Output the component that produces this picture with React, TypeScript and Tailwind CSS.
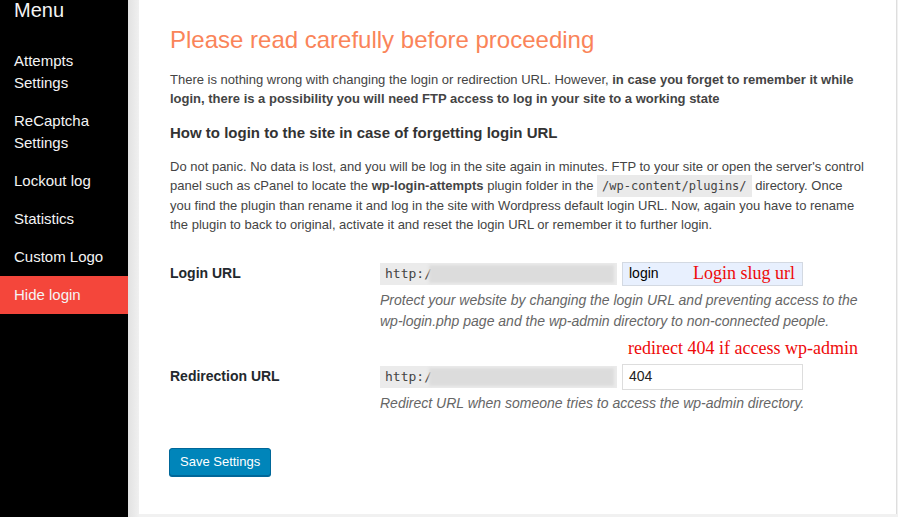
import React from "react";

const menu: { label: string[]; active?: boolean }[] = [
  { label: ["Attempts", "Settings"] },
  { label: ["ReCaptcha", "Settings"] },
  { label: ["Lockout log"] },
  { label: ["Statistics"] },
  { label: ["Custom Logo"] },
  { label: ["Hide login"], active: true },
];

function UrlBox() {
  return (
    <div className="relative flex h-[22px] w-[237px] items-center overflow-hidden bg-[#ebebeb] pl-[5px] font-['DejaVu_Sans_Mono',monospace] text-[13px] text-[#444]">
      <span>http:/</span>
      <div className="absolute left-[49px] top-[2px] h-[18px] w-[185px] bg-[#dcdcdc] blur-[1.5px]" />
    </div>
  );
}

export default function App() {
  return (
    <div className="flex h-[517px] w-[898px] overflow-hidden bg-[#f1f1f1] font-['Liberation_Sans',Arial,sans-serif]">
      <aside className="w-[128px] shrink-0 bg-black text-[#f4f4f4]">
        <div className="h-[42px] pl-[14px] text-[20px] leading-[20px]">Menu</div>
        {menu.map((m) => (
          <div
            key={m.label.join(" ")}
            className={
              m.active
                ? "bg-[#f4463b] py-[8px] pl-[14px] text-[15px] leading-[22px]"
                : "py-[8px] pl-[14px] text-[15px] leading-[22px]"
            }
          >
            {m.label.map((l) => (
              <div key={l}>{l}</div>
            ))}
          </div>
        ))}
      </aside>
      <div className="w-[11px] shrink-0 bg-[linear-gradient(to_right,#e2e2e2,#f0f0f0)]" />
      <main className="h-[514px] w-[758px] shrink-0 border-r border-[#dedede] bg-white pl-[31px] pr-[32px] pt-[24px] text-[#444]">
        <h1 className="text-[24px] leading-[31px] text-[#fa8459]">Please read carefully before proceeding</h1>
        <p className="mt-[15px] text-[13px] leading-[19px]">
          There is nothing wrong with changing the login or redirection URL. However,{" "}
          <b>in case you forget to remember it while login, there is a possibility you will need FTP access to log in your site to a working state</b>
        </p>
        <h3 className="mt-[15px] text-[15px] font-bold leading-[20px] text-[#333]">
          How to login to the site in case of forgetting login URL
        </h3>
        <p className="mt-[14px] text-[13px] leading-[19.4px]">
          Do not panic. No data is lost, and you will be log in the site again in minutes. FTP to your site or open the server's control panel such as cPanel to locate the <b>wp-login-attempts</b> plugin folder in the{" "}
          <code className="bg-[#eaeaea] px-[5px] py-[4px] font-['DejaVu_Sans_Mono',monospace] text-[12px] leading-[12px]">/wp-content/plugins/</code>{" "}
          directory. Once you find the plugin than rename it and log in the site with Wordpress default login URL. Now, again you have to rename the plugin to back to original, activate it and reset the login URL or remember it to further login.
        </p>

        <div className="mt-[27px] flex">
          <div className="flex h-[24px] w-[210px] shrink-0 items-center text-[14px] font-bold text-[#23282d]">Login URL</div>
          <div className="flex-1">
            <div className="relative flex items-center gap-[5px]">
              <UrlBox />
              <div className="flex h-[24px] w-[181px] items-center border border-[#d3d9e2] bg-[#e8f0fe] px-[6px] text-[14px] text-black">
                login
              </div>
              <span className="absolute left-[313px] top-[-2px] whitespace-nowrap font-['Liberation_Serif',serif] text-[18px] text-[#ee0a0a]">
                Login slug url
              </span>
            </div>
            <p className="mt-[4px] text-[14px] italic leading-[21px] text-[#666]">
              Protect your website by changing the login URL and preventing access to the wp-login.php page and the wp-admin directory to non-connected people.
            </p>
          </div>
        </div>

        <div className="relative mt-[32px] flex">
          <span className="absolute left-[458px] top-[-29px] whitespace-nowrap font-['Liberation_Serif',serif] text-[18px] text-[#ee0a0a]">
            redirect 404 if access wp-admin
          </span>
          <div className="flex h-[26px] w-[210px] shrink-0 items-center text-[14px] font-bold text-[#23282d]">Redirection URL</div>
          <div className="flex-1">
            <div className="flex items-center gap-[5px]">
              <UrlBox />
              <div className="flex h-[26px] w-[181px] items-center border border-[#dddddd] bg-white px-[6px] text-[14px] text-[#222]">
                404
              </div>
            </div>
            <p className="mt-[3px] text-[14px] italic leading-[21px] text-[#666]">
              Redirect URL when someone tries to access the wp-admin directory.
            </p>
          </div>
        </div>

        <button className="ml-[-1px] mt-[34px] h-[28px] rounded-[3px] border border-[#006799] bg-[#0085ba] px-[10px] text-[13px] text-white shadow-[0_1px_0_#006799]">
          Save Settings
        </button>
      </main>
    </div>
  );
}
